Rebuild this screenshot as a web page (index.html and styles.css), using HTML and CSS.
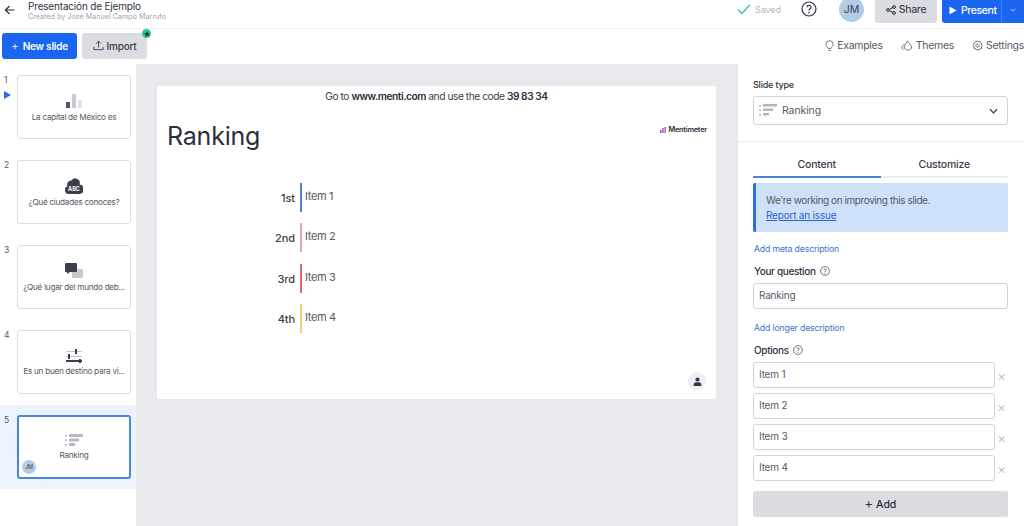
FILE: index.html
```html
<!DOCTYPE html>
<html lang="en">
<head>
<meta charset="utf-8">
<title>Presentación de Ejemplo</title>
<link rel="stylesheet" href="styles.css">
</head>
<body>
<header class="topbar">
  <svg class="back" viewBox="0 0 12 12" width="12" height="12"><path d="M10.5 6H1.5M5.5 2L1.5 6L5.5 10" fill="none" stroke="#2a2e3a" stroke-width="1.2"/></svg>
  <div class="doc">
    <div class="doc-title">Presentación de Ejemplo</div>
    <div class="doc-sub">Created by José Manuel Campo Marrufo</div>
  </div>
  <div class="saved">
    <svg viewBox="0 0 14 12" width="14" height="12"><path d="M1 6.5L5 10.5L13 1.5" fill="none" stroke="#45c79a" stroke-width="1.4"/></svg>
    <span>Saved</span>
  </div>
  <svg class="help" viewBox="0 0 16 16" width="16" height="16"><circle cx="8" cy="8" r="7" fill="none" stroke="#2f3340" stroke-width="1.2"/><path d="M6 6.3C6 3.8 10 3.8 10 6.2C10 7.8 8 7.7 8 9.6" fill="none" stroke="#2f3340" stroke-width="1.2"/><circle cx="8" cy="11.6" r=".8" fill="#2f3340"/></svg>
  <div class="avatar">JM</div>
  <div class="btn-share">
    <svg viewBox="0 0 10 10" width="10" height="10"><g fill="none" stroke="#2a2e3a" stroke-width="1"><circle cx="2" cy="5" r="1.4"/><circle cx="8" cy="2" r="1.4"/><circle cx="8" cy="8" r="1.4"/><path d="M3.2 4.4L6.8 2.6M3.2 5.6L6.8 7.4"/></g></svg>
    <span>Share</span>
  </div>
  <div class="btn-present">
    <svg viewBox="0 0 8 9" width="8" height="9"><path d="M0.5 0.5L7.5 4.5L0.5 8.5Z" fill="#fff"/></svg>
    <span class="present-label">Present</span>
    <span class="present-split"></span>
    <svg class="present-caret" viewBox="0 0 8 5" width="6" height="4"><path d="M1 1L4 4L7 1" fill="none" stroke="#d5e3ff" stroke-width="1.2"/></svg>
  </div>
</header>

<div class="toolbar">
  <div class="btn-new"><span class="plus">+</span> New slide</div>
  <div class="btn-import">
    <svg viewBox="0 0 12 12" width="11" height="11"><path d="M6 8V1.5M3.5 3.8L6 1.3L8.5 3.8M1 7.5V10.500H11V7.500" fill="none" stroke="#3a3e4a" stroke-width="1"/></svg>
    <span>Import</span>
    <span class="badge"><svg viewBox="0 0 10 10" width="6" height="6"><path d="M5 .5L6.3 3.4L9.5 3.7L7.1 5.9L7.8 9.2L5 7.5L2.2 9.2L2.9 5.9L.5 3.7L3.7 3.4Z" fill="#1a2a2a"/></svg></span>
  </div>
  <div class="tools">
    <span class="tool"><svg viewBox="0 0 10 13" width="9" height="12"><path d="M3.3 9.2C3 7.4 1 6.8 1 4.6A4 4 0 0 1 9 4.6C9 6.8 7 7.4 6.7 9.2ZM3.6 11.5H6.4" fill="none" stroke="#555a66" stroke-width=".9"/></svg>Examples</span>
    <span class="tool"><svg viewBox="0 0 13 12" width="12" height="11"><path d="M7.5 11C5 11 3.5 9.5 3.5 7.5C3.5 5.5 6 3.5 7 1C8 3.5 11.5 5.5 11.5 7.5C11.5 9.5 10 11 7.500 11ZM3.5 4.500C2.2 6 1 7 1 8.500C1 9.500 1.600 10.200 2.600 10.600" fill="none" stroke="#555a66" stroke-width=".9"/></svg>Themes</span>
    <span class="tool"><svg viewBox="0 0 12 12" width="11" height="11"><circle cx="6" cy="6" r="1.8" fill="none" stroke="#555a66" stroke-width=".9"/><path d="M6 .8L7.1 1.9L8.7 1.6L9.3 3.1L10.8 3.7L10.4 5.2L11.3 6.4L10.3 7.5L10.4 9.1L8.8 9.5L7.9 10.9L6.4 10.3L4.8 10.9L4 9.5L2.2 9.2L2.3 7.6L1 6.4L2 5.2L1.7 3.6L3.2 3.1L3.9 1.6L5.4 1.9Z" fill="none" stroke="#555a66" stroke-width=".9"/></svg>Settings</span>
  </div>
</div>

<main class="workspace">
  <nav class="sidebar">
    <div class="slide-item">
      <div class="slide-num">1<svg class="play" viewBox="0 0 7 8" width="7" height="8"><path d="M0 0L7 4L0 8Z" fill="#2b6fe0"/></svg></div>
      <div class="thumb">
        <svg viewBox="0 0 18 16" width="18" height="16"><rect x="1" y="9" width="4" height="6" fill="#555964"/><rect x="7" y="1" width="4" height="14" fill="#c9cbd1"/><rect x="13" y="7" width="4" height="8" fill="#e1e2e6"/></svg>
        <span>La capital de México es</span>
      </div>
    </div>
    <div class="slide-item">
      <div class="slide-num">2</div>
      <div class="thumb">
        <svg viewBox="0 0 18 16" width="18" height="16"><path d="M4 16A4 4 0 0 1 2.500 8.200A4 4 0 0 1 6.500 2.500A4.500 4.500 0 0 1 14.500 6.500A4.600 4.600 0 0 1 14 16Z" fill="#3b3f4b"/><text class="abc" x="9" y="13" text-anchor="middle">ABC</text></svg>
        <span>¿Qué ciudades conoces?</span>
      </div>
    </div>
    <div class="slide-item">
      <div class="slide-num">3</div>
      <div class="thumb">
        <svg viewBox="0 0 18 16" width="18" height="16"><rect x="7" y="6" width="11" height="9" rx="1" fill="#c6c8cd"/><path d="M1 0H11A1 1 0 0 1 12 1V8A1 1 0 0 1 11 9H5L2 11V9H1A1 1 0 0 1 0 8V1A1 1 0 0 1 1 0Z" fill="#3b3f4b"/></svg>
        <span>¿Qué lugar del mundo deb...</span>
      </div>
    </div>
    <div class="slide-item">
      <div class="slide-num">4</div>
      <div class="thumb">
        <svg viewBox="0 0 18 15" width="18" height="15"><g fill="#c6c8cd"><rect x="1" y="3" width="16" height="1"/><rect x="1" y="8" width="16" height="1"/></g><g fill="#3b3f4b"><rect x="10" y="1" width="2" height="5"/><rect x="3" y="6" width="2" height="5"/><rect x="1" y="12" width="16" height="2"/><rect x="14" y="11" width="2" height="4"/></g></svg>
        <span>Es un buen destino para vi...</span>
      </div>
    </div>
    <div class="slide-item is-active">
      <div class="slide-num">5</div>
      <div class="thumb">
        <svg viewBox="0 0 18 13" width="18" height="13"><g fill="#b9bbc2"><rect x="0" y="1" width="2" height="1.5"/><rect x="0" y="5.500" width="2" height="1.5"/><rect x="0" y="10" width="2" height="1.5"/><rect x="4" y="0" width="14" height="3"/><rect x="4" y="4.500" width="10" height="3"/><rect x="4" y="9" width="6" height="3"/></g></svg>
        <span>Ranking</span>
        <div class="thumb-avatar">JM</div>
      </div>
    </div>
  </nav>

  <section class="stage">
    <article class="slide">
      <p class="join">Go to <b>www.menti.com</b> and use the code <b>39 83 34</b></p>
      <div class="slide-head">
        <h1>Ranking</h1>
        <div class="logo">
          <svg viewBox="0 0 6 6" width="6" height="6"><rect x="0" y="3" width="1.500" height="3" fill="#3f6fe0"/><rect x="2.200" y="1" width="1.500" height="5" fill="#9a5fc0"/><rect x="4.400" y="0" width="1.500" height="6" fill="#e0587a"/></svg>
          <span>Mentimeter</span>
        </div>
      </div>
      <ol class="rank">
        <li><span class="rank-pos">1st</span><span class="rank-bar bar-blue"></span><span class="rank-item">Item 1</span></li>
        <li><span class="rank-pos">2nd</span><span class="rank-bar bar-pink"></span><span class="rank-item">Item 2</span></li>
        <li><span class="rank-pos">3rd</span><span class="rank-bar bar-red"></span><span class="rank-item">Item 3</span></li>
        <li><span class="rank-pos">4th</span><span class="rank-bar bar-yellow"></span><span class="rank-item">Item 4</span></li>
      </ol>
      <div class="audience"><svg viewBox="0 0 10 10" width="9" height="9"><circle cx="5" cy="2.800" r="2.300" fill="#34384a"/><path d="M0.800 10V8C.8 6.500 2.500 5.800 5 5.800C7.500 5.800 9.200 6.500 9.200 8V10Z" fill="#34384a"/></svg></div>
    </article>
  </section>

  <aside class="panel">
    <div class="type-block">
      <div class="label-sm">Slide type</div>
      <div class="select">
        <svg viewBox="0 0 18 13" width="18" height="13"><g fill="#b4b6bc"><rect x="0" y="1" width="2" height="1.500"/><rect x="0" y="5.500" width="2" height="1.500"/><rect x="0" y="10" width="2" height="1.500"/><rect x="4" y="0" width="14" height="2.500"/><rect x="4" y="4.500" width="10" height="2.500"/><rect x="4" y="9" width="6" height="2.500"/></g></svg>
        <span>Ranking</span>
        <svg class="chev" viewBox="0 0 10 6" width="9" height="6"><path d="M1 1L5 5L9 1" fill="none" stroke="#2a2e3a" stroke-width="1.300"/></svg>
      </div>
    </div>
    <div class="content-block">
      <div class="tabs">
        <div class="tab tab-on">Content</div>
        <div class="tab">Customize</div>
      </div>
      <div class="notice">
        <div class="notice-text">We're working on improving this slide.</div>
        <a class="notice-link">Report an issue</a>
      </div>
      <a class="add-link">Add meta description</a>
      <div class="field-label">Your question <svg viewBox="0 0 10 10" width="10" height="10"><circle cx="5" cy="5" r="4.400" fill="none" stroke="#3a3e4a" stroke-width=".7"/><path d="M3.800 3.900C3.800 2.500 6.200 2.500 6.200 3.900C6.200 4.900 5 4.800 5 6" fill="none" stroke="#3a3e4a" stroke-width=".7"/><circle cx="5" cy="7.300" r=".5" fill="#3a3e4a"/></svg></div>
      <div class="input">Ranking</div>
      <a class="add-link add-longer">Add longer description</a>
      <div class="field-label">Options <svg viewBox="0 0 10 10" width="10" height="10"><circle cx="5" cy="5" r="4.400" fill="none" stroke="#3a3e4a" stroke-width=".7"/><path d="M3.800 3.900C3.800 2.500 6.200 2.500 6.200 3.900C6.200 4.900 5 4.800 5 6" fill="none" stroke="#3a3e4a" stroke-width=".7"/><circle cx="5" cy="7.300" r=".5" fill="#3a3e4a"/></svg></div>
      <div class="options">
        <div class="option"><div class="input">Item 1</div><span class="remove">×</span></div>
        <div class="option"><div class="input">Item 2</div><span class="remove">×</span></div>
        <div class="option"><div class="input">Item 3</div><span class="remove">×</span></div>
        <div class="option"><div class="input">Item 4</div><span class="remove">×</span></div>
      </div>
      <div class="btn-add"><span class="add-plus">+</span> Add</div>
    </div>
  </aside>
</main>
</body>
</html>
```

FILE: styles.css
```css
* { box-sizing: border-box; }
html, body { margin: 0; height: 100%; }
body {
  width: 1024px;
  height: 526px;
  overflow: hidden;
  background: #fff;
  color: #2f3340;
  font-family: "Inter", "Liberation Sans", sans-serif;
  font-size: 11px;
  display: flex;
  flex-direction: column;
}

/* Top bar */
.topbar {
  height: 29px;
  flex: none;
  display: flex;
  align-items: flex-start;
  border-bottom: 1px solid #eff0f2;
  overflow: hidden;
}
.back { margin: 4px 0 0 4px; flex: none; }
.doc { margin-left: 12px; flex: 1; }
.doc-title { font-size: 10px; line-height: 12px; color: #2f3340; letter-spacing: -.18px; }
.doc-sub { font-size: 7.2px; line-height: 10px; color: #a2a5ad; }
.saved { display: flex; align-items: center; gap: 4px; margin-top: 3px; color: #b3b6bc; font-size: 9px; width: 64px; letter-spacing: -.1px; }
.help { margin: 1px 0 0 0; flex: none; }
.avatar {
  width: 25px; height: 25px; margin: -3px 0 0 22px; flex: none;
  border-radius: 50%;
  background: #b4cbe5;
  color: #3b4252;
  font-size: 10.5px;
  display: flex; align-items: center; justify-content: center;
}
.btn-share {
  width: 62px; height: 23px; margin-left: 11px; padding-bottom: 4px; flex: none;
  background: #dcdde2;
  border-radius: 0 0 3px 3px;
  display: flex; align-items: center; justify-content: center; gap: 3px;
  font-size: 10.5px; color: #2a2e3a; letter-spacing: -.2px;
}
.btn-present {
  width: 82px; height: 23px; margin-left: 5px; flex: none;
  background: #1a66f0;
  border-radius: 0 0 0 3px;
  color: #fff;
  display: flex; align-items: center;
  padding: 0 0 3px 7px;
  font-size: 10.5px; font-weight: 500; letter-spacing: -.4px;
}
.present-label { margin-left: 4px; }
.present-split { width: 1px; height: 23px; margin: 0 0 -3px 4px; background: #4b86f4; }
.present-caret { margin-left: 8px; }

/* Toolbar */
.toolbar {
  height: 35px;
  flex: none;
  display: flex;
  align-items: flex-start;
  padding: 4px 0 0 2px;
}
.btn-new {
  width: 75px; height: 26px; padding-bottom: 1px;
  background: #1a66f0;
  border-radius: 3px;
  color: #fff;
  font-size: 10px; font-weight: 600;
  letter-spacing: -.2px;
  display: flex; align-items: center; justify-content: center; gap: 4px;
}
.plus { font-weight: 300; font-size: 12px; }
.btn-import {
  position: relative;
  width: 65px; height: 26px; margin-left: 5px; padding-bottom: 1px;
  background: #dcdde2;
  border-radius: 3px;
  color: #3a3e4a;
  font-size: 10px; font-weight: 500; letter-spacing: -.25px;
  display: flex; align-items: center; justify-content: center; gap: 3px;
}
.badge {
  position: absolute; right: -4px; top: -4px;
  width: 9px; height: 9px;
  border-radius: 50%;
  background: #25c796;
  display: flex; align-items: center; justify-content: center;
}
.tools {
  margin-left: auto;
  display: flex; gap: 18px;
  height: 25px; align-items: center;
  color: #555a66; font-size: 10.5px;
  letter-spacing: -.28px;
}
.tool { display: flex; align-items: center; gap: 3px; }

/* Workspace */
.workspace { flex: 1; min-height: 0; display: flex; }

.sidebar { width: 136px; flex: none; padding-top: 11px; }
.slide-item { height: 85px; display: flex; padding-left: 4px; }
.is-active {
  height: 84px;
  background: #ecf3fc;
  padding-top: 10px;
  margin-top: -10px;
}
.slide-num {
  width: 13px; flex: none;
  display: flex; flex-direction: column; gap: 6px;
  font-size: 8.500px; color: #555a66; line-height: 10px;
}
.thumb {
  position: relative;
  width: 114px; height: 64px;
  background: #fff;
  border: 1px solid #dcdde1;
  border-radius: 3px;
  display: flex; flex-direction: column; align-items: center; justify-content: center; gap: 3px;
  font-size: 8.200px; color: #555a66;
  letter-spacing: -.28px;
  white-space: nowrap;
}
.is-active .thumb { border: 2px solid #4a86e0; }
.abc { font-size: 5.500px; font-weight: 700; fill: #fff; font-family: "Inter", sans-serif; letter-spacing: 0; }
.thumb-avatar {
  position: absolute; left: 3px; bottom: 3px;
  width: 14px; height: 14px;
  border-radius: 50%;
  background: #b4cbe5;
  font-size: 5.500px; color: #3b4252;
  display: flex; align-items: center; justify-content: center;
}

/* Stage */
.stage {
  flex: 1;
  background: #e8e9ec;
  padding: 22px 22px 0 21px;
  min-width: 0;
}
.slide {
  position: relative;
  height: 313px;
  background: #fff;
  border-radius: 2px;
  padding: 4px 10px 0;
}
.join { margin: 0; text-align: center; font-size: 10.2px; line-height: 13px; color: #3a3e4a; letter-spacing: -.45px; }
.join b { font-weight: 600; color: #2a2e3a; }
.slide-head { display: flex; justify-content: space-between; align-items: flex-start; margin-top: 17px; }
h1 { margin: 0; font-size: 25px; line-height: 32px; font-weight: 400; color: #2b2f3b; letter-spacing: -.2px; }
.logo { display: flex; align-items: center; gap: 2px; margin: 5px -1px 0 0; font-size: 7.300px; font-weight: 600; color: #2a2e3a; letter-spacing: -.2px; }
.rank { list-style: none; margin: 0; padding: 0; position: absolute; left: 0; top: 97px; display: flex; flex-direction: column; gap: 11.3px; }
.rank li { display: flex; height: 29px; }
.rank-pos { width: 138px; text-align: right; align-self: center; padding-top: 1px; font-size: 11px; font-weight: 500; color: #3a3e4a; letter-spacing: -.1px; }
.rank-bar { width: 2px; margin-left: 5px; }
.rank-item { margin-left: 3px; margin-top: 6px; font-size: 11px; line-height: 14px; color: #555a66; letter-spacing: -.35px; }
.bar-blue { background: #4a7fd8; }
.bar-pink { background: #e8a0b8; }
.bar-red { background: #de6a6e; }
.bar-yellow { background: #f6cf77; }
.audience {
  position: absolute; right: 10px; bottom: 9px;
  width: 18px; height: 18px;
  border-radius: 50%;
  background: #eeeff1;
  display: flex; align-items: center; justify-content: center;
}

/* Panel */
.panel { width: 286px; flex: none; background: #fff; }
.type-block { height: 78px; padding: 15px 16px 0 15px; border-bottom: 1px solid #eeeff1; }
.label-sm { font-size: 9px; line-height: 11px; font-weight: 500; color: #2f3340; letter-spacing: -.2px; }
.select {
  margin-top: 6px;
  height: 29px;
  border: 1px solid #d3d4d8;
  border-radius: 3px;
  display: flex; align-items: center;
  padding: 0 9px 0 5px;
  gap: 5px;
  font-size: 10.500px;
  color: #555a66;
  letter-spacing: -.1px;
}
.chev { margin-left: auto; }
.content-block { padding: 14px 16px 0 15px; }
.tabs { display: flex; height: 22px; border-bottom: 2px solid #ecedef; }
.tab { flex: 1; text-align: center; font-size: 10.500px; line-height: 18px; font-weight: 500; color: #3a3e4a; margin-bottom: -2px; height: 22px; letter-spacing: -.2px; }
.tab-on { border-bottom: 2px solid #4a84d6; }
.notice {
  margin-top: 5px;
  height: 49px;
  background: #cfe0fb;
  border-left: 3px solid #2b6fe0;
  border-radius: 2px;
  padding: 10px 0 0 10px;
  font-size: 10px;
  line-height: 15px;
  color: #555a66;
}
.notice-text { letter-spacing: -.42px; }
.notice-link { color: #2b64d0; text-decoration: underline; letter-spacing: -.2px; }
.add-link { display: block; margin-top: 12px; padding-left: 1px; font-size: 8.700px; line-height: 11px; color: #3f6fd0; letter-spacing: -.15px; }
.add-longer { margin-top: 14px; }
.field-label { display: flex; align-items: center; gap: 4px; margin-top: 10px; padding-left: 1px; font-size: 10px; line-height: 12px; font-weight: 500; color: #2f3340; letter-spacing: -.35px; }
.input {
  margin-top: 6px;
  height: 26px;
  border: 1px solid #d3d4d8;
  border-radius: 3px;
  padding: 0 5px;
  font-size: 10px;
  line-height: 23px;
  color: #555a66;
  letter-spacing: -.2px;
}
.options { margin-top: 6px; display: flex; flex-direction: column; gap: 5px; }
.option { display: flex; align-items: center; }
.option .input { margin-top: 0; flex: 1; }
.remove { width: 13px; flex: none; text-align: center; font-size: 14px; font-weight: 300; color: #b9bbc0; }
.btn-add {
  margin-top: 10px;
  height: 26px;
  background: #dcdde2;
  border-radius: 2px;
  text-align: center;
  font-size: 10.500px;
  line-height: 25px;
  font-weight: 500;
  color: #2a2e3a;
}
.add-plus { font-size: 13px; font-weight: 400; }
```
